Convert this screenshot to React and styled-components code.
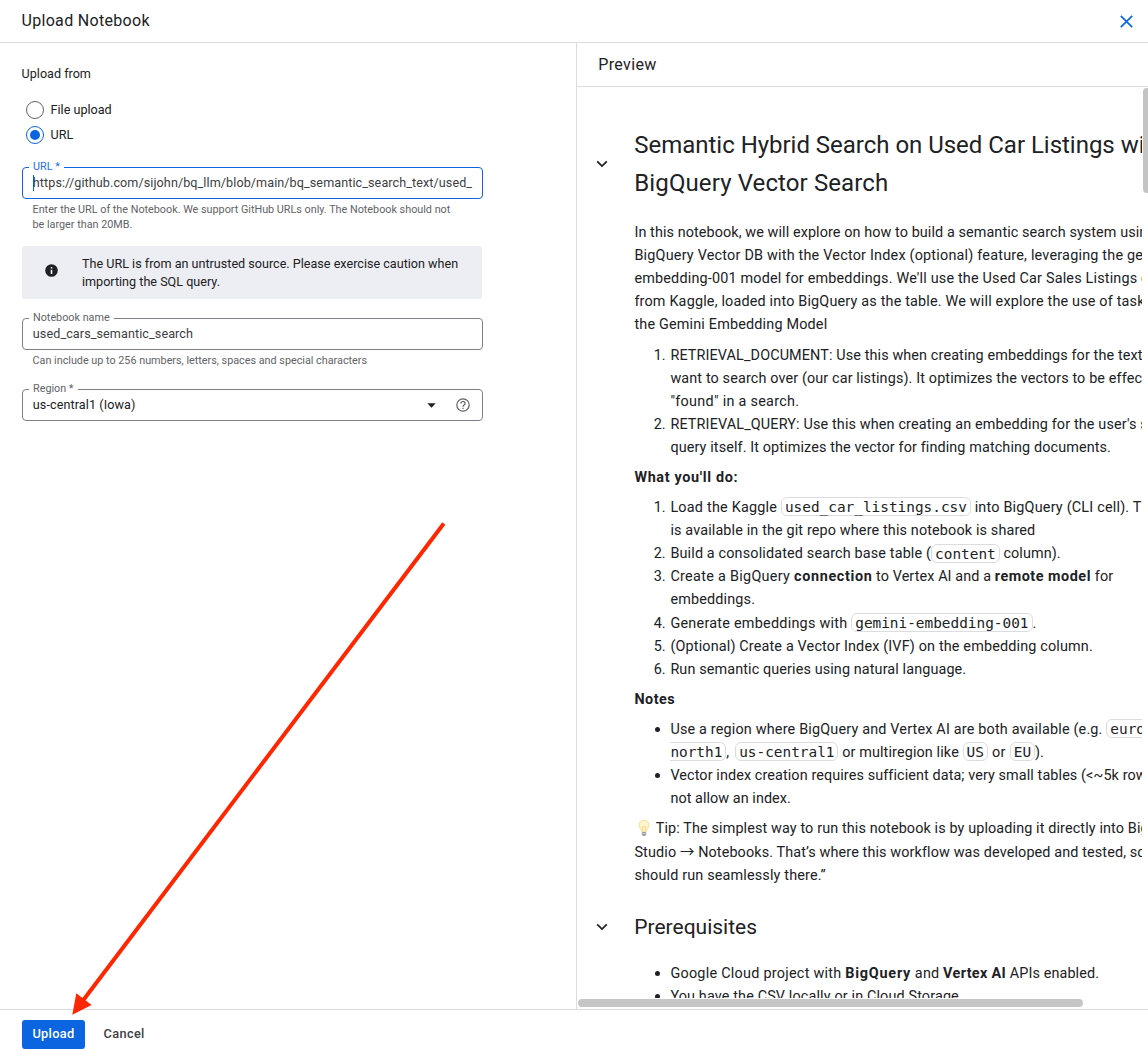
import React from "react";
import styled, { createGlobalStyle, css } from "styled-components";

const GlobalStyle = createGlobalStyle`
  * { box-sizing: border-box; }
  body {
    margin: 0;
    background: #fff;
    color: #202124;
    font-family: Roboto, Inter, "Liberation Sans", sans-serif;
    overflow: hidden;
  }
`;

const Dialog = styled.div`
  position: relative;
  display: flex;
  flex-direction: column;
  width: 1148px;
  height: 1051px;
  overflow: hidden;
`;

const Header = styled.header`
  display: flex;
  align-items: center;
  justify-content: space-between;
  height: 43px;
  flex: none;
  padding: 0 15px 0 21.5px;
  border-bottom: 1px solid #dadce0;
`;

const Title = styled.h1`
  margin: 0;
  font-size: 16px;
  font-weight: 400;
  line-height: 24px;
  letter-spacing: ${(p) => p.$ls || 0.31}px;
`;

const IconButton = styled.button`
  display: flex;
  padding: 0;
  border: 0;
  background: none;
`;

const Body = styled.div`
  display: flex;
  flex: 1;
  min-height: 0;
`;

const FormPane = styled.section`
  display: flex;
  flex-direction: column;
  width: 576px;
  flex: none;
  padding: 21px 93px 0 22px;
  font-size: 12.6px;
`;

const GroupLabel = styled.div`
  height: 20px;
  margin-left: -0.4px;
  line-height: 20px;
`;

const RadioGroup = styled.div`
  display: flex;
  flex-direction: column;
  margin-top: 13px;
  padding-left: 4px;
`;

const RadioOption = styled.label`
  display: flex;
  align-items: center;
  gap: 6.6px;
  height: 25px;
`;

const RadioCircle = styled.span`
  display: flex;
  align-items: center;
  justify-content: center;
  width: 18px;
  height: 18px;
  border: 1.4px solid ${(p) => (p.$on ? "#0b65e0" : "#5f6368")};
  border-radius: 50%;

  &::after {
    content: "";
    display: ${(p) => (p.$on ? "block" : "none")};
    width: 10px;
    height: 10px;
    border-radius: 50%;
    background: #0b65e0;
  }
`;

const Field = styled.div`
  display: flex;
  align-items: center;
  justify-content: space-between;
  position: relative;
  width: 461px;
  height: 32px;
  margin: ${(p) => p.$top}px 0 0;
  padding: 0 12px 0 9.8px;
  border: 1px solid ${(p) => (p.$focused ? "#0b65e0" : "#7c8086")};
  border-radius: 4px;
`;

const FieldLabel = styled.span`
  position: absolute;
  top: -8px;
  left: 6px;
  padding: 0 4px;
  background: #fff;
  color: ${(p) => (p.$focused ? "#1a6fe8" : "#5f6368")};
  font-size: 10.8px;
  line-height: 14px;
  white-space: nowrap;
`;

const FieldValue = styled.span`
  line-height: 20px;
  white-space: nowrap;
  letter-spacing: ${(p) => p.$ls || 0}px;
  color: ${(p) => (p.$strong ? "#202124" : "#3c4043")};
`;

const Caret = styled.span`
  position: absolute;
  left: 10px;
  top: 7px;
  width: 1px;
  height: 16px;
  background: #0b57d0;
`;

const FieldIcons = styled.span`
  display: flex;
  align-items: center;
  gap: 20px;
`;

const Helper = styled.div`
  margin: 3px 0 0 10.5px;
  color: #5f6368;
  font-size: 10.8px;
  line-height: 15px;
  white-space: nowrap;
`;

const Banner = styled.div`
  display: flex;
  align-items: center;
  gap: 24px;
  width: 460px;
  height: 53px;
  margin-top: 14px;
  padding-left: 23px;
  border-radius: 3px;
  background: #edeef3;
  line-height: 18px;
  white-space: nowrap;

  svg { margin-top: -5px; }
`;

const PreviewPane = styled.section`
  display: flex;
  flex-direction: column;
  flex: 1;
  min-width: 0;
  border-left: 1px solid #dadce0;
`;

const PreviewHeader = styled.div`
  display: flex;
  align-items: center;
  height: 44px;
  flex: none;
  padding-left: 21.3px;
  border-bottom: 1px solid #dadce0;
`;

const ScrollArea = styled.div`
  display: grid;
  grid-template-columns: 565px 6px;
  grid-template-rows: 911px 11px;
  flex: 1;
  min-height: 0;
`;

const Notebook = styled.div`
  overflow: hidden;
  padding-top: 39px;
`;

const Cell = styled.article`
  display: flex;
  flex-direction: column;
`;

const HeadingRow = styled.div`
  display: flex;
  align-items: center;
  height: ${(p) => p.$h}px;
  margin-top: ${(p) => p.$top || 0}px;
`;

const Toggle = styled.span`
  display: flex;
  justify-content: flex-end;
  width: 31px;
  margin-right: 26.3px;
  flex: none;
`;

const Heading = styled.h2`
  margin: 0;
  font-size: ${(p) => p.$size}px;
  font-weight: 400;
  line-height: 38px;
  white-space: nowrap;
`;

const Content = styled.div`
  margin: ${(p) => p.$top}px 0 0 57.4px;
  font-size: 14.4px;
`;

const Block = styled.div`
  margin-bottom: ${(p) => p.$gap ?? 7}px;
`;

const Line = styled.div`
  height: ${(p) => p.$h || 23}px;
  line-height: ${(p) => p.$h || 23}px;
  white-space: pre;
`;

const Text = styled.span`
  letter-spacing: ${(p) => p.$ls || 0}px;
`;

const Arrow = styled.span`
  font-family: "Noto Sans CJK JP", "DejaVu Sans", sans-serif;
  line-height: 1;
`;

const Strong = styled.strong`
  font-weight: 700;
  letter-spacing: ${(p) => p.$ls || 0}px;
`;

const Code = styled.code`
  position: relative;
  top: ${(p) => (p.$low ? 0 : -1)}px;
  padding: 0.5px 3px;
  border: 1px solid #dadce0;
  border-radius: 6px;
  font-family: "DejaVu Sans Mono", monospace;
  font-size: 14.4px;
  ${(p) => p.$tail && css`
    padding-left: 0;
    border-left: 0;
    border-radius: 0 6px 6px 0;
  `}
`;

const Item = styled.div`
  display: flex;
  margin-top: ${(p) => p.$top || 0}px;
`;

const Marker = styled.span`
  width: 36px;
  flex: none;
  padding-right: 4.8px;
  line-height: 23px;
  text-align: right;
`;

const Bullet = styled.span`
  width: 5px;
  height: 5px;
  margin: 9px 10.6px 0 20.4px;
  flex: none;
  border-radius: 50%;
  background: #202124;
`;

const TipIcon = styled.svg`
  width: 14px;
  height: 18px;
  margin: 0 4.6px 0 2.8px;
  vertical-align: -4px;
`;

const VThumb = styled.div`
  width: 6px;
  height: 105px;
  margin: 1px 0 0 1px;
  border-radius: 4px 0 0 4px;
  background: #c4c4c4;
`;

const HThumb = styled.div`
  width: 505px;
  height: 8px;
  margin: 1px 0 0 1px;
  border-radius: 4px;
  background: #c6c6c6;
`;

const Footer = styled.footer`
  display: flex;
  align-items: center;
  gap: 18.5px;
  height: 42px;
  flex: none;
  padding: 8px 0 0 22px;
  border-top: 1px solid #dadce0;
`;

const Button = styled.button`
  height: 29px;
  margin: 0 0 1px;
  padding: 0 0 1px;
  width: ${(p) => (p.$primary ? 63 : 41)}px;
  border: 0;
  border-radius: 3px;
  background: ${(p) => (p.$primary ? "#0b65e0" : "transparent")};
  color: ${(p) => (p.$primary ? "#fff" : "#3c4043")};
  font: 500 12.8px Roboto, sans-serif;
  letter-spacing: 0.34px;
  white-space: nowrap;
`;

const ArrowOverlay = styled.svg`
  position: absolute;
  left: 0;
  top: 0;
  pointer-events: none;
`;

const Chevron = () => (
  <svg width="12" height="8" viewBox="0 0 12 8" fill="none" stroke="#202124" strokeWidth="1.7">
    <path d="M1.2 1.4 L6 6.1 L10.8 1.4" />
  </svg>
);

const Numbered = ({ n, top, children }) => (
  <Item $top={top}>
    <Marker>{n}.</Marker>
    <div>{children}</div>
  </Item>
);

const Bulleted = ({ children }) => (
  <Item>
    <Bullet />
    <div>{children}</div>
  </Item>
);

const T = ({ s, children }) => <Text $ls={s}>{children}</Text>;

const L = ({ s, children }) => (
  <Line>
    <Text $ls={s}>{children}</Text>
  </Line>
);

export default function App() {
  return (
    <>
      <GlobalStyle />
      <Dialog>
        <Header>
          <Title>Upload Notebook</Title>
          <IconButton aria-label="Close">
            <svg width="13" height="13" viewBox="0 0 13 13" stroke="#0b65e0" strokeWidth="1.7">
              <path d="M0.8 0.8 L12.2 12.2 M12.2 0.8 L0.8 12.2" />
            </svg>
          </IconButton>
        </Header>

        <Body>
          <FormPane>
            <GroupLabel>Upload from</GroupLabel>
            <RadioGroup>
              <RadioOption><RadioCircle />File upload</RadioOption>
              <RadioOption><RadioCircle $on />URL</RadioOption>
            </RadioGroup>

            <Field $top={20} $focused>
              <FieldLabel $focused>URL *</FieldLabel>
              <Caret />
              <FieldValue $ls={0.085}>
                https://github.com/sijohn/bq_llm/blob/main/bq_semantic_search_text/used_
              </FieldValue>
            </Field>
            <Helper>
              Enter the URL of the Notebook. We support GitHub URLs only. The Notebook should not
              <br />
              be larger than 20MB.
            </Helper>

            <Banner>
              <svg width="13" height="13" viewBox="0 0 13 13">
                <circle cx="6.5" cy="6.5" r="6.3" fill="#202124" />
                <path d="M6.5 3 v1.5 M6.5 5.7 v4.2" stroke="#fff" strokeWidth="1.5" />
              </svg>
              <div>
                The URL is from an untrusted source. Please exercise caution when
                <br />
                importing the SQL query.
              </div>
            </Banner>

            <Field $top={19}>
              <FieldLabel>Notebook name</FieldLabel>
              <FieldValue $ls={0.09}>used_cars_semantic_search</FieldValue>
            </Field>
            <Helper>Can include up to 256 numbers, letters, spaces and special characters</Helper>

            <Field $top={21}>
              <FieldLabel>Region *</FieldLabel>
              <FieldValue $ls={0.09} $strong>us-central1 (Iowa)</FieldValue>
              <FieldIcons>
                <svg width="9" height="5" viewBox="0 0 9 5">
                  <path d="M0.3 0.3 H8.7 L4.5 4.7 Z" fill="#202124" />
                </svg>
                <svg width="14" height="14" viewBox="0 0 14 14" fill="none" stroke="#5f6368" strokeWidth="1.2">
                  <circle cx="7" cy="7" r="6.2" />
                  <path d="M4.9 5.6 C4.9 2.8 9.1 2.8 9.1 5.4 C9.1 7 7 7 7 8.7" />
                  <path d="M7 9.7 V11" />
                </svg>
              </FieldIcons>
            </Field>
          </FormPane>

          <PreviewPane>
            <PreviewHeader>
              <Title $ls={0.34}>Preview</Title>
            </PreviewHeader>
            <ScrollArea>
              <Notebook>
                <Cell>
                  <HeadingRow $h={76}>
                    <Toggle><Chevron /></Toggle>
                    <Heading $size={24}>
                      <T s={-0.023}>Semantic Hybrid Search on Used Car Listings with</T>
                      <br />
                      <T s={0.11}>BigQuery Vector Search</T>
                    </Heading>
                  </HeadingRow>
                  <Content $top={19}>
                    <Block $gap={8}>
                      <L s={0.092}>In this notebook, we will explore on how to build a semantic search system using</L>
                      <L s={0.21}>BigQuery Vector DB with the Vector Index (optional) feature, leveraging the gemini-</L>
                      <L s={0.185}>embedding-001 model for embeddings. We'll use the Used Car Sales Listings dataset</L>
                      <L s={0.178}>from Kaggle, loaded into BigQuery as the table. We will explore the use of task types in</L>
                      <L s={0.18}>the Gemini Embedding Model</L>
                    </Block>
                    <Block>
                      <Numbered n={1}>
                        <L s={0.118}>RETRIEVAL_DOCUMENT: Use this when creating embeddings for the text you</L>
                        <L s={0.128}>want to search over (our car listings). It optimizes the vectors to be effectively</L>
                        <L s={0.28}>"found" in a search.</L>
                      </Numbered>
                      <Numbered n={2}>
                        <L s={0.142}>RETRIEVAL_QUERY: Use this when creating an embedding for the user's search</L>
                        <L s={0.114}>query itself. It optimizes the vector for finding matching documents.</L>
                      </Numbered>
                    </Block>
                    <Block>
                      <Line><Strong $ls={0.66}>What you'll do:</Strong></Line>
                    </Block>
                    <Block>
                      <Numbered n={1}>
                        <Line>
                          <T s={0.22}>Load the Kaggle </T>
                          <Code>used_car_listings.csv</Code>
                          <T s={0.2}> into BigQuery (CLI cell). This file</T>
                        </Line>
                        <L s={0.138}>is available in the git repo where this notebook is shared</L>
                      </Numbered>
                      <Numbered n={2}>
                        <Line>
                          <T s={0.15}>Build a consolidated search base table (</T>
                          <Code $low>content</Code>
                          <T s={0.1}> column).</T>
                        </Line>
                      </Numbered>
                      <Numbered n={3}>
                        <Line>
                          <T s={0.3}>Create a BigQuery </T>
                          <Strong $ls={0.64}>connection</Strong>
                          <T s={0.1}> to Vertex AI and a </T>
                          <Strong $ls={0.52}>remote model</Strong>
                          <T s={0.161}> for</T>
                        </Line>
                        <L s={0.16}>embeddings.</L>
                      </Numbered>
                      <Numbered n={4} top={1}>
                        <Line>
                          <T s={0.25}>Generate embeddings with </T>
                          <Code>gemini-embedding-001</Code>
                          <T>.</T>
                        </Line>
                      </Numbered>
                      <Numbered n={5}>
                        <L s={0.158}>(Optional) Create a Vector Index (IVF) on the embedding column.</L>
                      </Numbered>
                      <Numbered n={6}>
                        <L s={0.115}>Run semantic queries using natural language.</L>
                      </Numbered>
                    </Block>
                    <Block>
                      <Line><Strong $ls={0.5}>Notes</Strong></Line>
                    </Block>
                    <Block>
                      <Bulleted>
                        <Line>
                          <T s={0.18}>Use a region where BigQuery and Vertex AI are both available (e.g. </T>
                          <Code>europe-</Code>
                        </Line>
                        <Line>
                          <Code $tail>north1</Code>
                          <T s={1.2}>, </T>
                          <Code>us-central1</Code>
                          <T s={0.123}> or multiregion like </T>
                          <Code>US</Code>
                          <T s={0.4}> or </T>
                          <Code>EU</Code>
                          <T>).</T>
                        </Line>
                      </Bulleted>
                      <Bulleted>
                        <L s={0.1}>Vector index creation requires sufficient data; very small tables (&lt;~5k rows) may</L>
                        <L s={0.06}>not allow an index.</L>
                      </Bulleted>
                    </Block>
                    <Block $gap={0}>
                      <Line $h={24}>
                        <TipIcon viewBox="0 0 14 18">
                          <path d="M7 1.2 C3.9 1.2 2 3.4 2 6 C2 8.6 4.2 9.6 4.7 12.6 H9.3 C9.8 9.6 12 8.6 12 6 C12 3.4 10.1 1.2 7 1.2 Z" fill="#fff5cc" stroke="#f5dfa0" strokeWidth="1" />
                          <path d="M5.8 12.4 L5.2 7.4 L7 8.2 L8.8 7.4 L8.2 12.4" fill="none" stroke="#f9d070" strokeWidth="0.7" />
                          <path d="M4.8 12.9 H9.2 V15.3 L8.2 17 H5.8 L4.8 15.3 Z" fill="#9da0a5" />
                          <path d="M4.8 14.4 H9.2" stroke="#d5d7da" strokeWidth="0.7" />
                        </TipIcon>
                        <T s={0.119}>Tip: The simplest way to run this notebook is by uploading it directly into BigQuery</T>
                      </Line>
                      <Line>
                        <T s={0.15}>Studio </T>
                        <Arrow>→</Arrow>
                        <T s={0.12}> Notebooks. That’s where this workflow was developed and tested, so it</T>
                      </Line>
                      <L s={0.16}>should run seamlessly there.”</L>
                    </Block>
                  </Content>
                </Cell>
                <Cell>
                  <HeadingRow $h={34} $top={23}>
                    <Toggle><Chevron /></Toggle>
                    <Heading $size={21}>Prerequisites</Heading>
                  </HeadingRow>
                  <Content $top={18}>
                    <Bulleted>
                      <Line>
                        <T s={0.26}>Google Cloud project with </T>
                        <Strong $ls={0.78}>BigQuery</Strong>
                        <T s={0.194}> and </T>
                        <Strong $ls={0.35}>Vertex AI</Strong>
                        <T s={0.1}> APIs enabled.</T>
                      </Line>
                    </Bulleted>
                    <Bulleted>
                      <L s={0.14}>You have the CSV locally or in Cloud Storage</L>
                    </Bulleted>
                  </Content>
                </Cell>
              </Notebook>
              <VThumb />
              <HThumb />
            </ScrollArea>
          </PreviewPane>
        </Body>

        <Footer>
          <Button $primary>Upload</Button>
          <Button>Cancel</Button>
        </Footer>

        <ArrowOverlay width="460" height="1030" viewBox="0 0 460 1030">
          <path d="M443.8 523.5 L83 1000.5" stroke="#ff2600" strokeWidth="4" />
          <path d="M72.3 1014.8 L76.3 993.3 L91.6 1005 Z" fill="#ff2600" />
        </ArrowOverlay>
      </Dialog>
    </>
  );
}
